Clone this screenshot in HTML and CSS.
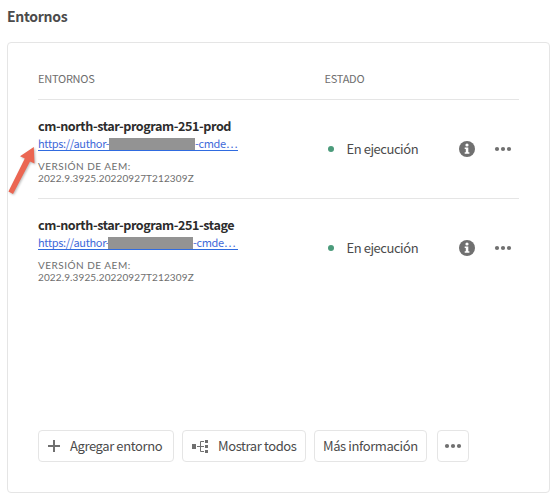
FILE: index.html
```html
<!DOCTYPE html>
<html lang="es">
<head>
<meta charset="utf-8">
<title>Entornos</title>
<link rel="stylesheet" href="styles.css">
</head>
<body>
<svg class="defs" width="0" height="0">
  <symbol id="more" viewBox="0 0 18 6"><circle cx="3" cy="3" r="2.1"/><circle cx="9" cy="3" r="2.1"/><circle cx="15" cy="3" r="2.1"/></symbol>
  <symbol id="info" viewBox="0 0 16 16"><circle cx="8" cy="8" r="8"/><circle cx="8" cy="4" r="1.6" fill="#fff"/><path fill="#fff" d="M5.7 6.5h3.6v4.7h1.1v1.5H5.7v-1.5h1.1V8H5.7z"/></symbol>
</svg>
<h1 class="title">Entornos</h1>
<main class="card">
  <div class="head"><span class="head-env">Entornos</span><span class="head-state">Estado</span></div>
  <section class="row">
    <div class="env">
      <h2 class="name prod">cm-north-star-program-251-prod</h2>
      <a class="link"><span class="start">https://author-</span><span class="mask"></span><span class="end">-cmde…</span></a>
      <p class="version"><span class="label">VERSIÓN DE AEM:</span><span class="number">2022.9.3925.20220927T212309Z</span></p>
    </div>
    <div class="state"><i class="dot"></i><span class="status">En ejecución</span><svg class="info"><use href="#info"/></svg><svg class="more"><use href="#more"/></svg></div>
    <svg class="arrow" viewBox="0 0 34 54"><path d="M27.8 5 L28.5 21.5 L24 19.4 L7 52 L2.4 49.6 L18.8 16.5 L14 14.2z"/></svg>
  </section>
  <section class="row last">
    <div class="env">
      <h2 class="name stage">cm-north-star-program-251-stage</h2>
      <a class="link"><span class="start short">https://author-</span><span class="mask narrow"></span><span class="end">-cmde…</span></a>
      <p class="version"><span class="label">VERSIÓN DE AEM:</span><span class="number">2022.9.3925.20220927T212309Z</span></p>
    </div>
    <div class="state"><i class="dot"></i><span class="status">En ejecución</span><svg class="info"><use href="#info"/></svg><svg class="more"><use href="#more"/></svg></div>
  </section>
  <footer class="actions">
    <button class="button add"><svg class="plus" viewBox="0 0 12 12"><path d="M5 0h2v5h5v2H7v5H5V7H0V5h5z"/></svg><span class="add-text">Agregar entorno</span></button>
    <button class="button all"><svg class="tree" viewBox="0 0 17 13"><path d="M0 4h4v5H0zM13 0h3v3h-3zM13 5h3v3h-3zM13 10h3v3h-3z"/><path class="branch" d="M5 6.5h7M12 1.5H8.5v10H12"/></svg><span class="all-text">Mostrar todos</span></button>
    <button class="button learn"><span class="learn-text">Más información</span></button>
    <button class="button extra" aria-label="Más"><svg class="more"><use href="#more"/></svg></button>
  </footer>
</main>
</body>
</html>
```

FILE: styles.css
```css
* { box-sizing: border-box; }
body {
  margin: 0;
  width: 556px;
  height: 497px;
  padding: 8px 6px 4px 7px;
  display: flex;
  flex-direction: column;
  background: #fff;
  color: #4b4b4b;
  font-family: "Noto Sans CJK SC", "Noto Sans", sans-serif;
  overflow: hidden;
}
h1, h2, p { margin: 0; }
svg { display: block; fill: #707070; flex: none; }
.defs { position: absolute; }
.title { height: 34px; font-size: 14px; line-height: 17px; font-weight: 700; letter-spacing: -0.3px; }
.card {
  flex: 1;
  display: flex;
  flex-direction: column;
  padding: 0 30px;
  border: 1px solid #e5e5e5;
  border-radius: 4px;
}
.head {
  height: 57px;
  padding-top: 28px;
  display: flex;
  border-bottom: 1px solid #e5e5e5;
  font-size: 11px;
  line-height: 15px;
  letter-spacing: -0.25px;
  text-transform: uppercase;
  color: #6e6e6e;
}
.head-env { width: 286.5px; }
.row {
  position: relative;
  height: 99px;
  display: flex;
  border-bottom: 1px solid #e5e5e5;
}
.last { border-bottom: 0; }
.env { width: 286px; padding-top: 17px; }
.name { font-size: 12.6px; line-height: 18px; height: 18px; color: #2c2c2c; white-space: nowrap; letter-spacing: -0.42px; }
.link {
  display: flex;
  width: 200px;
  height: 16px;
  border-bottom: 1px solid #2f6be0;
  color: #4169d9;
  font-size: 11px;
  line-height: 17px;
  letter-spacing: -0.33px;
  white-space: nowrap;
}
.start { width: 71px; }
.short { width: 70px; }
.mask { width: 86px; height: 12px; margin-top: 3px; background: #939393; }
.narrow { width: 85px; }
.version { margin-top: 9px; font-family: Lato, sans-serif; font-size: 10px; line-height: 12px; color: #6e6e6e; }
.version span { display: block; white-space: nowrap; }
.label { letter-spacing: 0.5px; }
.number { letter-spacing: 0.12px; }
.state { height: 97px; flex: 1; display: flex; align-items: center; }
.dot { width: 6px; height: 6px; margin-left: 4px; border-radius: 50%; background: #4b9b7b; }
.status { width: 112.5px; margin-left: 12.5px; font-size: 13px; line-height: 20px; letter-spacing: -0.45px; white-space: nowrap; }
.info { width: 16px; height: 16px; }
.more { width: 18px; height: 6px; }
.state .more { margin-left: 19px; }
.arrow {
  position: absolute;
  left: -32px;
  top: 42px;
  width: 34px;
  height: 54px;
  fill: #eb6652;
  filter: drop-shadow(1px 1px 1px #0004);
}
.actions { display: flex; margin-top: auto; margin-bottom: 30px; }
.button {
  height: 32px;
  padding: 0;
  display: flex;
  align-items: center;
  border: 1px solid #e5e5e5;
  border-radius: 4px;
  background: #fff;
  color: #4b4b4b;
  font: 13px/20px "Noto Sans CJK SC", "Noto Sans", sans-serif;
  letter-spacing: -0.4px;
  white-space: nowrap;
}
.add { width: 136px; padding-left: 9px; }
.plus { width: 12px; height: 12px; margin-right: 10px; }
.all { width: 124px; margin-left: 8px; padding-left: 9px; }
.tree { width: 17px; height: 13px; margin-right: 9px; }
.branch { fill: none; stroke: #707070; }
.learn { width: 113px; margin-left: 8px; padding-left: 8px; }
.extra { width: 32px; margin-left: 10px; justify-content: center; }
```
